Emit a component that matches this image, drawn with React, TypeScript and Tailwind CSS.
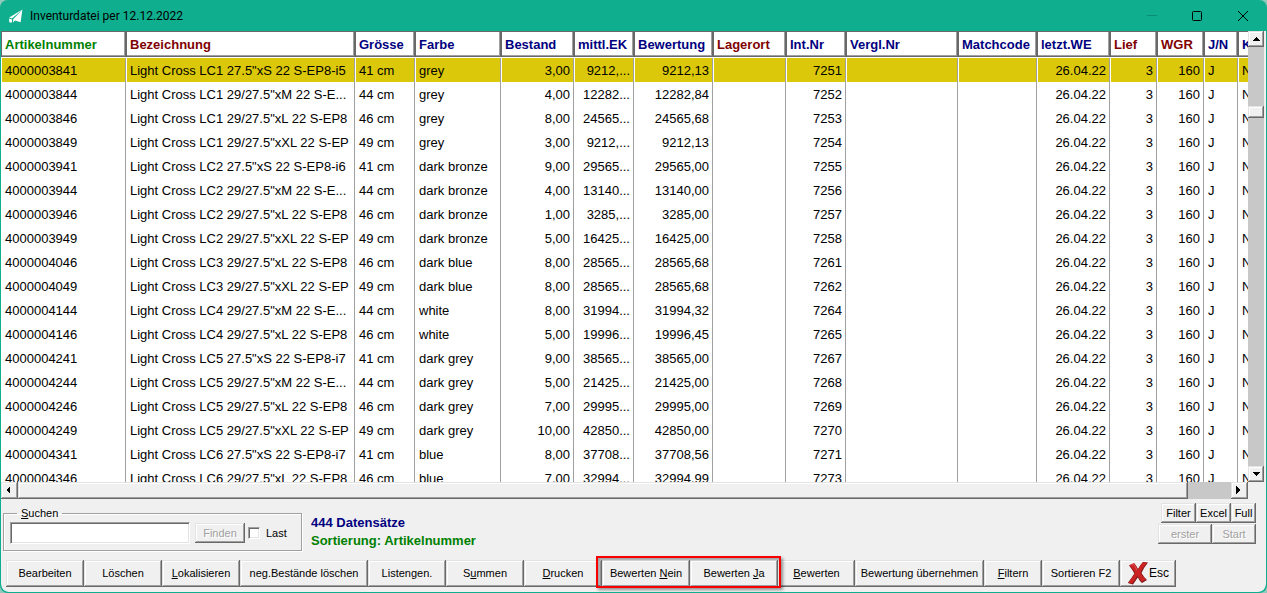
import type { ReactNode } from "react";
import { clsx } from "clsx";

type Column = {
  label: string;
  width: string;
  color: string;
  align?: "right";
};

const GREEN = "text-[#008000]";
const MAROON = "text-[#800000]";
const NAVY = "text-[#000080]";

const COLUMNS: Column[] = [
  { label: "Artikelnummer", width: "w-[125px]", color: GREEN },
  { label: "Bezeichnung", width: "w-[229px]", color: MAROON },
  { label: "Grösse", width: "w-[60px]", color: NAVY },
  { label: "Farbe", width: "w-[86px]", color: NAVY },
  { label: "Bestand", width: "w-[73px]", color: NAVY, align: "right" },
  { label: "mittl.EK", width: "w-[60px]", color: NAVY, align: "right" },
  { label: "Bewertung", width: "w-[79px]", color: NAVY, align: "right" },
  { label: "Lagerort", width: "w-[73px]", color: MAROON },
  { label: "Int.Nr", width: "w-[60px]", color: NAVY, align: "right" },
  { label: "Vergl.Nr", width: "w-[112px]", color: NAVY },
  { label: "Matchcode", width: "w-[79px]", color: NAVY },
  { label: "letzt.WE", width: "w-[73px]", color: NAVY, align: "right" },
  { label: "Lief", width: "w-[47px]", color: MAROON, align: "right" },
  { label: "WGR", width: "w-[47px]", color: MAROON, align: "right" },
  { label: "J/N", width: "w-[34px]", color: NAVY },
  { label: "K", width: "w-[60px]", color: NAVY },
];

// Artikelnummer, Bezeichnung, Grösse, Farbe, Bestand, mittl.EK, Bewertung, Int.Nr
const ARTICLES = [
  ["4000003841", 'Light Cross LC1 27.5"xS 22 S-EP8-i5', "41 cm", "grey", "3,00", "9212,...", "9212,13", "7251"],
  ["4000003844", 'Light Cross LC1 29/27.5"xM 22 S-E...', "44 cm", "grey", "4,00", "12282...", "12282,84", "7252"],
  ["4000003846", 'Light Cross LC1 29/27.5"xL 22 S-EP8', "46 cm", "grey", "8,00", "24565...", "24565,68", "7253"],
  ["4000003849", 'Light Cross LC1 29/27.5"xXL 22 S-EP', "49 cm", "grey", "3,00", "9212,...", "9212,13", "7254"],
  ["4000003941", 'Light Cross LC2 27.5"xS 22 S-EP8-i6', "41 cm", "dark bronze", "9,00", "29565...", "29565,00", "7255"],
  ["4000003944", 'Light Cross LC2 29/27.5"xM 22 S-E...', "44 cm", "dark bronze", "4,00", "13140...", "13140,00", "7256"],
  ["4000003946", 'Light Cross LC2 29/27.5"xL 22 S-EP8', "46 cm", "dark bronze", "1,00", "3285,...", "3285,00", "7257"],
  ["4000003949", 'Light Cross LC2 29/27.5"xXL 22 S-EP', "49 cm", "dark bronze", "5,00", "16425...", "16425,00", "7258"],
  ["4000004046", 'Light Cross LC3 29/27.5"xL 22 S-EP8', "46 cm", "dark blue", "8,00", "28565...", "28565,68", "7261"],
  ["4000004049", 'Light Cross LC3 29/27.5"xXL 22 S-EP', "49 cm", "dark blue", "8,00", "28565...", "28565,68", "7262"],
  ["4000004144", 'Light Cross LC4 29/27.5"xM 22 S-E...', "44 cm", "white", "8,00", "31994...", "31994,32", "7264"],
  ["4000004146", 'Light Cross LC4 29/27.5"xL 22 S-EP8', "46 cm", "white", "5,00", "19996...", "19996,45", "7265"],
  ["4000004241", 'Light Cross LC5 27.5"xS 22 S-EP8-i7', "41 cm", "dark grey", "9,00", "38565...", "38565,00", "7267"],
  ["4000004244", 'Light Cross LC5 29/27.5"xM 22 S-E...', "44 cm", "dark grey", "5,00", "21425...", "21425,00", "7268"],
  ["4000004246", 'Light Cross LC5 29/27.5"xL 22 S-EP8', "46 cm", "dark grey", "7,00", "29995...", "29995,00", "7269"],
  ["4000004249", 'Light Cross LC5 29/27.5"xXL 22 S-EP', "49 cm", "dark grey", "10,00", "42850...", "42850,00", "7270"],
  ["4000004341", 'Light Cross LC6 27.5"xS 22 S-EP8-i7', "41 cm", "blue", "8,00", "37708...", "37708,56", "7271"],
  ["4000004346", 'Light Cross LC6 29/27.5"xL 22 S-EP8', "46 cm", "blue", "7,00", "32994...", "32994,99", "7273"],
];

const RAISED =
  "bg-[#f0f0f0] shadow-[inset_-1px_-1px_#696969,inset_1px_1px_#e3e3e3,inset_-2px_-2px_#a0a0a0,inset_2px_2px_#ffffff]";
const HEADER_CELL =
  "h-[27px] border-b border-white bg-white px-1 pt-[2px] text-left font-bold shadow-[inset_1px_1px_#696969,inset_-1px_-1px_#696969,inset_-2px_-2px_#a0a0a0]";

function PushButton({
  children,
  className,
  disabled,
}: {
  children: ReactNode;
  className?: string;
  disabled?: boolean;
}) {
  return (
    <button
      type="button"
      disabled={disabled}
      className={clsx(
        RAISED,
        "flex shrink-0 items-center justify-center whitespace-nowrap",
        disabled && "text-[#a0a0a0] [text-shadow:1px_1px_#ffffff]",
        className,
      )}
    >
      {children}
    </button>
  );
}

const ARROWS = {
  up: "M4 0 L8 4 H0 Z",
  down: "M0 0 H8 L4 4 Z",
  left: "M4 0 V8 L0 4 Z",
  right: "M0 0 V8 L4 4 Z",
};

function ArrowButton({ dir, label }: { dir: keyof typeof ARROWS; label: string }) {
  const vertical = dir === "up" || dir === "down";
  return (
    <button
      type="button"
      aria-label={label}
      className={clsx(
        RAISED,
        "flex shrink-0 items-center justify-center",
        vertical ? "h-4 w-4" : "h-[17px] w-[17px] pr-1 pb-px",
      )}
    >
      <svg width={vertical ? 8 : 4} height={vertical ? 4 : 8} shapeRendering="crispEdges" aria-hidden>
        <path d={ARROWS[dir]} />
      </svg>
    </button>
  );
}

function TitleBar() {
  return (
    <header className="flex h-[31px] shrink-0 items-center justify-between pl-2">
      <div className="flex items-center gap-[7px]">
        <svg width="14" height="14" viewBox="0 0 14 14" fill="#ffffff" aria-hidden>
          <path d="M13.4 0.4 L0.2 8.4 L3 9.6 Z" />
          <path d="M13.4 0.4 L4.2 10.2 L4 13.6 L6 11.6 L11.6 13.2 Z" />
          <path d="M0 9.4 L3 10.4 V13.6 H0.4 Z" />
        </svg>
        <h1 className="pt-px font-[Roboto,'Open_Sans',sans-serif] text-[12px] text-black">
          Inventurdatei per 12.12.2022
        </h1>
      </div>
      <div className="flex h-full">
        <button type="button" disabled aria-label="Minimieren" className="flex w-[46px] items-center justify-center">
          <svg width="10" height="10" stroke="#0a8d73" aria-hidden>
            <path d="M0 4.5 H10" />
          </svg>
        </button>
        <button type="button" aria-label="Maximieren" className="flex w-[44px] items-center justify-center">
          <svg width="10" height="10" fill="none" stroke="#000000" aria-hidden>
            <rect x="0.5" y="0.5" width="9" height="9" rx="1" />
          </svg>
        </button>
        <button type="button" aria-label="Schließen" className="flex w-[47px] items-center justify-center">
          <svg width="10" height="10" stroke="#000000" aria-hidden>
            <path d="M0 0 L10 10 M10 0 L0 10" />
          </svg>
        </button>
      </div>
    </header>
  );
}

function InventoryTable() {
  return (
    <div className="min-w-0 flex-1 overflow-hidden bg-white">
      <table className="w-[1297px] table-fixed border-separate border-spacing-0 text-[13px] leading-4">
        <thead>
          <tr>
            {COLUMNS.map((col) => (
              <th key={col.label} className={clsx(HEADER_CELL, col.width, col.color)}>
                {col.label}
              </th>
            ))}
          </tr>
        </thead>
        <tbody>
          {ARTICLES.map((article, i) => {
            const cells = [
              ...article.slice(0, 7),
              "",
              article[7],
              "",
              "",
              "26.04.22",
              "3",
              "160",
              "J",
              "N",
            ];
            return (
              <tr key={article[0]} className={clsx(i === 0 && "bg-[#dbc80a]")}>
                {cells.map((cell, c) => (
                  <td
                    key={COLUMNS[c].label}
                    className={clsx(
                      "h-6 overflow-hidden border-l border-r border-l-white border-r-[#a0a0a0] px-[3px] pt-[2px] whitespace-nowrap",
                      COLUMNS[c].align === "right" && "text-right",
                    )}
                  >
                    {cell}
                  </td>
                ))}
              </tr>
            );
          })}
        </tbody>
      </table>
    </div>
  );
}

function SearchBox() {
  return (
    <fieldset className="h-[46px] w-[299px] border border-[#a0a0a0] pl-[6px] shadow-[1px_1px_#ffffff,inset_1px_1px_#ffffff]">
      <legend className="ml-[7px] px-1 leading-4">
        <label htmlFor="suchen">
          <u>S</u>uchen
        </label>
      </legend>
      <div className="flex items-center pt-px">
        <input
          id="suchen"
          type="text"
          className="h-[22px] w-[180px] border border-t-[#a0a0a0] border-r-white border-b-white border-l-[#a0a0a0] bg-white px-1 shadow-[inset_1px_1px_#696969,inset_-1px_-1px_#e3e3e3] outline-none"
        />
        <PushButton disabled className="ml-[5px] h-5 w-[50px]">
          Finden
        </PushButton>
        <label className="ml-[3px] flex items-center gap-[6px]">
          <input
            type="checkbox"
            className="h-3 w-3 appearance-none border border-t-[#a0a0a0] border-r-white border-b-white border-l-[#a0a0a0] bg-white shadow-[inset_1px_1px_#696969,inset_-1px_-1px_#e3e3e3]"
          />
          Last
        </label>
      </div>
    </fieldset>
  );
}

function RedCross() {
  return (
    <svg width="22" height="24" viewBox="0 0 22 24" aria-hidden>
      <path
        d="M2 4.5 L7.5 2.5 Q9.5 5 11 8 Q13.5 3.5 16 1 L21 1.6 Q17 6.5 14.5 12 Q17 16.5 20 19 L15 22 Q12.5 20 10.8 16.6 Q8.5 20 6 23.6 L0.8 22 Q4.5 17 7.4 12.4 Q5 8 2 4.5 Z"
        fill="#7d1616"
      />
      <path
        d="M2.4 4 L7 2 Q9.3 5 10.9 9 Q13.3 4 16 1.2 L20 1.8 Q16 6.5 13.4 11.8 Q16 16 19 18.4 L15 20.8 Q12.4 18.6 10.4 14.8 Q8 19 5.4 22.4 L1.4 21.4 Q5 17 8.2 12.2 Q5.4 7.4 2.4 4 Z"
        fill="#cb2323"
      />
      <path d="M3.6 4.2 L6.4 3 Q8.6 6 10 9.4" fill="none" stroke="#e46060" strokeWidth="0.8" />
    </svg>
  );
}

function ToolBar() {
  return (
    <nav className="flex shrink-0 pb-[5px] pl-[5px]">
      <PushButton className="h-[27px] w-[78px] pb-[2px]">Bearbeiten</PushButton>
      <PushButton className="h-[27px] w-[78px] pb-[2px]">Löschen</PushButton>
      <PushButton className="h-[27px] w-[78px] pb-[2px]">
        <u>L</u>okalisieren
      </PushButton>
      <PushButton className="h-[27px] w-[128px] pb-[2px]">neg.Bestände löschen</PushButton>
      <PushButton className="h-[27px] w-[78px] pb-[2px]">
        Listen<u>g</u>en.
      </PushButton>
      <PushButton className="h-[27px] w-[78px] pb-[2px]">
        S<u>u</u>mmen
      </PushButton>
      <PushButton className="h-[27px] w-[78px] pb-[2px]">
        <u>D</u>rucken
      </PushButton>
      <div className="relative flex">
        <PushButton className="h-[27px] w-[88px] pb-[2px]">
          Bewerten&nbsp;<u>N</u>ein
        </PushButton>
        <PushButton className="h-[27px] w-[88px] pb-[2px]">
          Bewerten&nbsp;<u>J</u>a
        </PushButton>
        <div className="pointer-events-none absolute -top-1 -right-[3px] -bottom-px -left-[6px] border-2 border-[#f80000] shadow-[2px_2px_3px_#00000066,inset_2px_2px_2px_#00000055]" />
      </div>
      <PushButton className="h-[27px] w-[77px] pb-[2px]">
        <u>B</u>ewerten
      </PushButton>
      <PushButton className="h-[27px] w-[129px] pb-[2px]">Bewertung übernehmen</PushButton>
      <PushButton className="h-[27px] w-[58px] pb-[2px]">
        <u>F</u>iltern
      </PushButton>
      <PushButton className="h-[27px] w-[78px] pb-[2px]">Sortieren F2</PushButton>
      <PushButton className="h-[27px] w-[56px] pb-px text-[12px]">
        <RedCross />
        Esc
      </PushButton>
    </nav>
  );
}

export default function App() {
  return (
    <div className="h-screen bg-[#8fc9bb]">
      <main className="flex h-full flex-col overflow-hidden rounded-lg border-x border-b border-[#0fae8e] bg-[#0fae8e] font-['Liberation_Sans',Arial,sans-serif] text-[11px] leading-4 text-black">
        <TitleBar />
        <div className="flex min-h-0 flex-1 flex-col overflow-hidden rounded-b-lg bg-[#f0f0f0]">
          <div className="flex min-h-0 flex-1 pr-[2px]">
            <InventoryTable />
            <div className="flex w-4 shrink-0 flex-col bg-[#c8c8c8]">
              <ArrowButton dir="up" label="Nach oben" />
              <div className="flex flex-1 flex-col pt-[59px]">
                <div className={clsx(RAISED, "h-3")} />
              </div>
              <ArrowButton dir="down" label="Nach unten" />
            </div>
          </div>
          <div className="flex h-[17px] shrink-0 pr-[18px]">
            <ArrowButton dir="left" label="Nach links" />
            <div className="flex flex-1 bg-[#c8c8c8] pr-[43px]">
              <div className={clsx(RAISED, "flex-1")} />
            </div>
            <ArrowButton dir="right" label="Nach rechts" />
          </div>

          <div className="flex h-[61px] shrink-0 items-start justify-between pr-[10px] pl-[2px]">
            <div className="flex gap-[9px] pt-[6px]">
              <SearchBox />
              <div className="pt-[9px] text-[13px] leading-[18px] font-bold">
                <p className="text-[#000080]">444 Datensätze</p>
                <p className="text-[#008000]">Sortierung: Artikelnummer</p>
              </div>
            </div>
            <div className="flex flex-col items-end gap-px pt-1">
              <div className="flex">
                <PushButton className="h-5 w-[35px]">Filter</PushButton>
                <PushButton className="h-5 w-[35px]">Excel</PushButton>
                <PushButton className="h-5 w-[25px]">Full</PushButton>
              </div>
              <div className="flex">
                <PushButton disabled className="h-5 w-[54px]">
                  erster
                </PushButton>
                <PushButton disabled className="h-5 w-[44px]">
                  Start
                </PushButton>
              </div>
            </div>
          </div>

          <ToolBar />
        </div>
      </main>
    </div>
  );
}
